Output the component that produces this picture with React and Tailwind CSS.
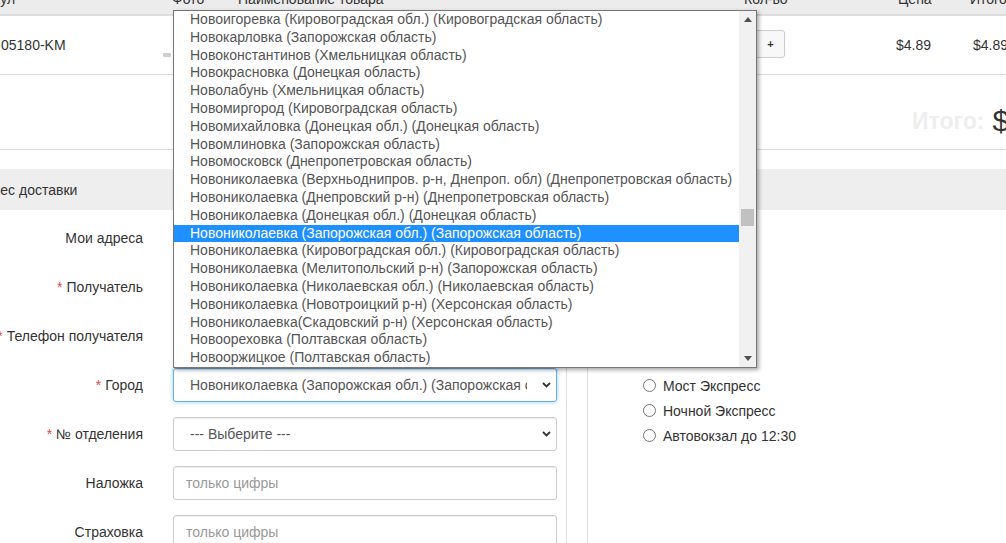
import React from "react";

const items = [
  "Новоигоревка (Кировоградская обл.) (Кировоградская область)",
  "Новокарловка (Запорожская область)",
  "Новоконстантинов (Хмельницкая область)",
  "Новокрасновка (Донецкая область)",
  "Новолабунь (Хмельницкая область)",
  "Новомиргород (Кировоградская область)",
  "Новомихайловка (Донецкая обл.) (Донецкая область)",
  "Новомлиновка (Запорожская область)",
  "Новомосковск (Днепропетровская область)",
  "Новониколаевка (Верхньоднипров. р-н, Днепроп. обл) (Днепропетровская область)",
  "Новониколаевка (Днепровский р-н) (Днепропетровская область)",
  "Новониколаевка (Донецкая обл.) (Донецкая область)",
  "Новониколаевка (Запорожская обл.) (Запорожская область)",
  "Новониколаевка (Кировоградская обл.) (Кировоградская область)",
  "Новониколаевка (Мелитопольский р-н) (Запорожская область)",
  "Новониколаевка (Николаевская обл.) (Николаевская область)",
  "Новониколаевка (Новотроицкий р-н) (Херсонская область)",
  "Новониколаевка(Скадовский р-н) (Херсонская область)",
  "Новоореховка (Полтавская область)",
  "Новооржицкое (Полтавская область)",
];

function Chevron() {
  return (
    <svg width="9" height="6" viewBox="0 0 9 6" className="block">
      <path d="M1 1 L4.5 4.5 L8 1" fill="none" stroke="#333" strokeWidth="1.8" />
    </svg>
  );
}

function Row({ label, req, children }) {
  return (
    <div className="flex items-center h-[34px] mb-[15px]">
      <div className="w-[143px] flex justify-end whitespace-nowrap text-[#333]">
        {req && <span className="text-[#e0493f] mr-[4px]">*</span>}
        <span>{label}</span>
      </div>
      <div className="ml-[30px] w-[384px] h-[34px]">{children}</div>
    </div>
  );
}

function Select({ text, focus }) {
  return (
    <div
      className={
        "h-[34px] w-full flex items-center rounded-[3px] border bg-white pl-[16px] pr-[5px] " +
        (focus
          ? "border-[#66afe9] shadow-[inset_0_1px_1px_rgba(0,0,0,0.075),0_0_5px_rgba(102,175,233,0.6)]"
          : "border-[#ccc] shadow-[inset_0_1px_1px_rgba(0,0,0,0.075)]")
      }
    >
      <div className="w-[337px] overflow-hidden whitespace-nowrap text-[#555]">{text}</div>
      <div className="flex-1 flex justify-end">
        <Chevron />
      </div>
    </div>
  );
}

function Input({ placeholder }) {
  return (
    <div className="h-[34px] w-full flex items-center rounded-[3px] border border-[#ccc] bg-white pl-[12px] shadow-[inset_0_1px_1px_rgba(0,0,0,0.075)]">
      <span className="text-[#999]">{placeholder}</span>
    </div>
  );
}

function Radio({ label }) {
  return (
    <div className="flex items-center h-[25px]">
      <span className="w-[13px] h-[13px] rounded-full border border-[#767676] bg-white"></span>
      <span className="ml-[7px] text-[#333]">{label}</span>
    </div>
  );
}

export default function App() {
  return (
    <div
      className="relative w-[1006px] h-[543px] overflow-hidden bg-white text-[14px] leading-[20px] text-[#333]"
      style={{ fontFamily: '"Liberation Sans", Arial, sans-serif' }}
    >
      <div className="w-[1100px]">
        {/* table header */}
        <div className="h-[16px] bg-[#ececec] border-b-2 border-[#ddd] overflow-hidden">
          <div className="flex mt-[-11px] whitespace-nowrap">
            <div className="w-[172px]">
              <span className="ml-[-37px]">Артикул</span>
            </div>
            <div className="w-[66px]">Фото</div>
            <div className="w-[506px]">Наименование товара</div>
            <div className="w-[154px]">Кол-во</div>
            <div className="w-[72px]">Цена</div>
            <div className="w-[100px]">Итого</div>
          </div>
        </div>
        {/* body row */}
        <div className="h-[59px] border-b border-[#ddd] flex items-center whitespace-nowrap">
          <div className="w-[163px] pl-[1px]">05180-KM</div>
          <div className="w-[593px] h-[58px] flex">
            <div className="mt-[37px] w-[8px] h-[4px] rounded-[1px] bg-[#bbb] opacity-70"></div>
          </div>
          <div className="w-[140px] flex">
            <div className="w-[29px] h-[28px] mt-[-3px] border border-[#ccc] rounded-r-[3px] bg-[#f8f8f8] flex items-center justify-center text-[11px] font-bold">
              +
            </div>
          </div>
          <div className="w-[77px]">$4.89</div>
          <div>$4.89</div>
        </div>
        {/* total row */}
        <div className="h-[75px] border-b border-[#ddd] flex items-center whitespace-nowrap pl-[912px] pt-[18px]">
          <span className="text-[23px] font-bold text-[#eeeeee]">Итого:</span>
          <span className="ml-[8px] text-[30px] text-[#333]">$4.89</span>
        </div>
        <div className="h-[19px]"></div>
        {/* section heading */}
        <div className="h-[41px] bg-[#eee] flex items-center whitespace-nowrap">
          <span className="ml-[-25px]">Адрес доставки</span>
        </div>
        {/* form area */}
        <div className="flex h-[400px]">
          <div className="w-[567px] border-r border-[#ddd] pt-[11px]">
            <Row label="Мои адреса">
              <Select text="--- Выберите ---" />
            </Row>
            <Row label="Получатель" req>
              <Input placeholder="" />
            </Row>
            <Row label="Телефон получателя" req>
              <Input placeholder="" />
            </Row>
            <Row label="Город" req>
              <Select text="Новониколаевка (Запорожская обл.) (Запорожская область)" focus />
            </Row>
            <Row label="№ отделения" req>
              <Select text="--- Выберите ---" />
            </Row>
            <Row label="Наложка">
              <Input placeholder="только цифры" />
            </Row>
            <Row label="Страховка">
              <Input placeholder="только цифры" />
            </Row>
          </div>
          <div className="w-[20px]"></div>
          <div className="flex-1 border-l border-[#ddd] pl-[55px] pt-[163px]">
            <Radio label="Мост Экспресс" />
            <Radio label="Ночной Экспресс" />
            <Radio label="Автовокзал до 12:30" />
          </div>
        </div>
      </div>

      {/* open dropdown list */}
      <div className="absolute left-[173px] top-[10px] w-[584px] h-[358px] border border-[#767676] bg-white flex shadow-[2px_2px_4px_rgba(0,0,0,0.35)]">
        <div className="w-[565px] overflow-hidden">
          {items.map((t, i) => (
            <div
              key={i}
              className={
                "h-[17.8px] leading-[17.8px] pl-[16px] whitespace-nowrap " +
                (i === 12 ? "bg-[#1e90ff] text-white" : "text-[#555]")
              }
            >
              {t}
            </div>
          ))}
        </div>
        <div className="w-[17px] bg-[#f1f1f1] flex flex-col items-center">
          <div className="h-[17px] flex items-center justify-center">
            <svg width="8" height="5" viewBox="0 0 8 5">
              <path d="M0 5 L4 0 L8 5 Z" fill="#505050" />
            </svg>
          </div>
          <div className="flex-1 w-full">
            <div className="mx-[2px] mt-[181px] h-[17px] bg-[#c1c1c1]"></div>
          </div>
          <div className="h-[17px] flex items-center justify-center">
            <svg width="8" height="5" viewBox="0 0 8 5">
              <path d="M0 0 L8 0 L4 5 Z" fill="#505050" />
            </svg>
          </div>
        </div>
      </div>
    </div>
  );
}
